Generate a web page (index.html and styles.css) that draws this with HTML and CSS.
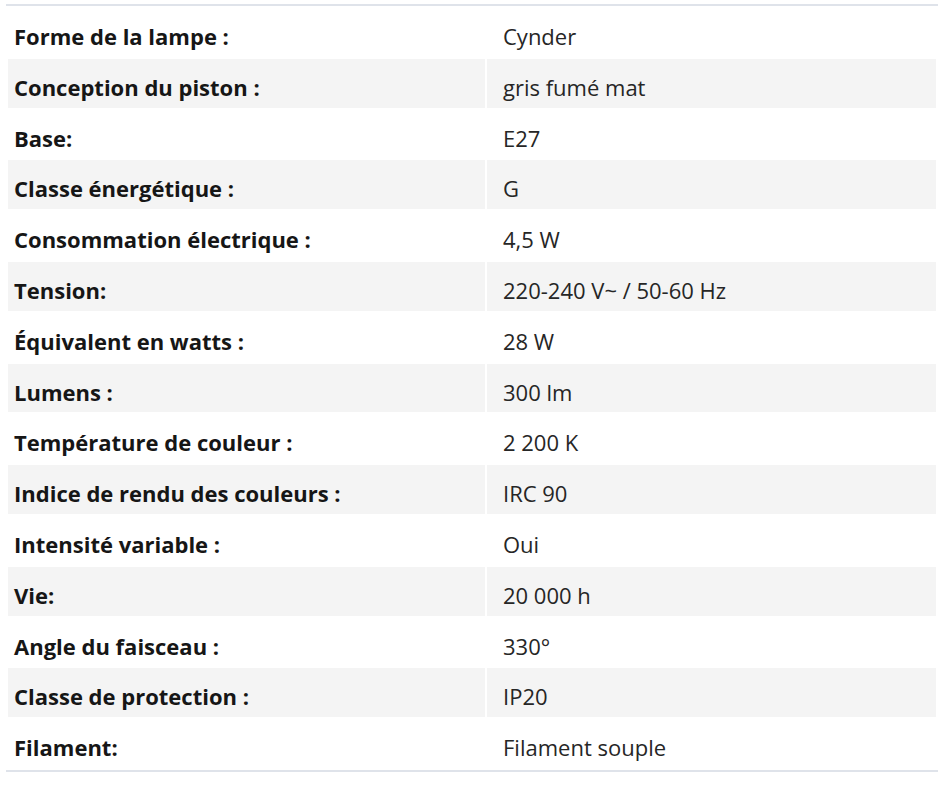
FILE: index.html
```html
<!DOCTYPE html>
<html lang="fr">
<head>
<meta charset="utf-8">
<title>Caractéristiques</title>
<link rel="stylesheet" href="styles.css">
</head>
<body>
<div class="wrap">
<table class="specs">
<tbody>
<tr><th>Forme de la lampe :</th><td>Cynder</td></tr>
<tr><th>Conception du piston :</th><td>gris fumé mat</td></tr>
<tr><th>Base:</th><td>E27</td></tr>
<tr><th>Classe énergétique :</th><td>G</td></tr>
<tr><th>Consommation électrique :</th><td>4,5 W</td></tr>
<tr><th>Tension:</th><td>220-240 V~ / 50-60 Hz</td></tr>
<tr><th>Équivalent en watts :</th><td>28 W</td></tr>
<tr><th>Lumens :</th><td>300 lm</td></tr>
<tr><th>Température de couleur :</th><td>2 200 K</td></tr>
<tr><th>Indice de rendu des couleurs :</th><td>IRC 90</td></tr>
<tr><th>Intensité variable :</th><td>Oui</td></tr>
<tr><th>Vie:</th><td>20 000 h</td></tr>
<tr><th>Angle du faisceau :</th><td>330°</td></tr>
<tr><th>Classe de protection :</th><td>IP20</td></tr>
<tr><th>Filament:</th><td>Filament souple</td></tr>
</tbody>
</table>
</div>
</body>
</html>
```
FILE: styles.css
```css
html, body {
  margin: 0;
  padding: 0;
  background: #ffffff;
}
.wrap {
  padding: 4px 0 0 8px;
}
.specs {
  width: 932px;
  border-collapse: separate;
  border-spacing: 2px;
  margin: 0 0 0 -2px;
  border-top: 2px solid #dfe3ea;
  border-bottom: 2px solid #dfe3ea;
  font-family: "Open Sans", "DejaVu Sans", sans-serif;
  font-size: 22px;
  table-layout: fixed;
}
.specs th,
.specs td {
  padding: 13px 0 5.8px;
  line-height: 30px;
  text-align: left;
  vertical-align: top;
  white-space: nowrap;
}
.specs th {
  width: 471px;
  padding-left: 6px;
  font-weight: 700;
  color: #161616;
}
.specs td {
  padding-left: 16px;
  font-weight: 400;
  color: #262626;
}
.specs tr:nth-child(even) th,
.specs tr:nth-child(even) td {
  background: #f4f4f4;
}
```
